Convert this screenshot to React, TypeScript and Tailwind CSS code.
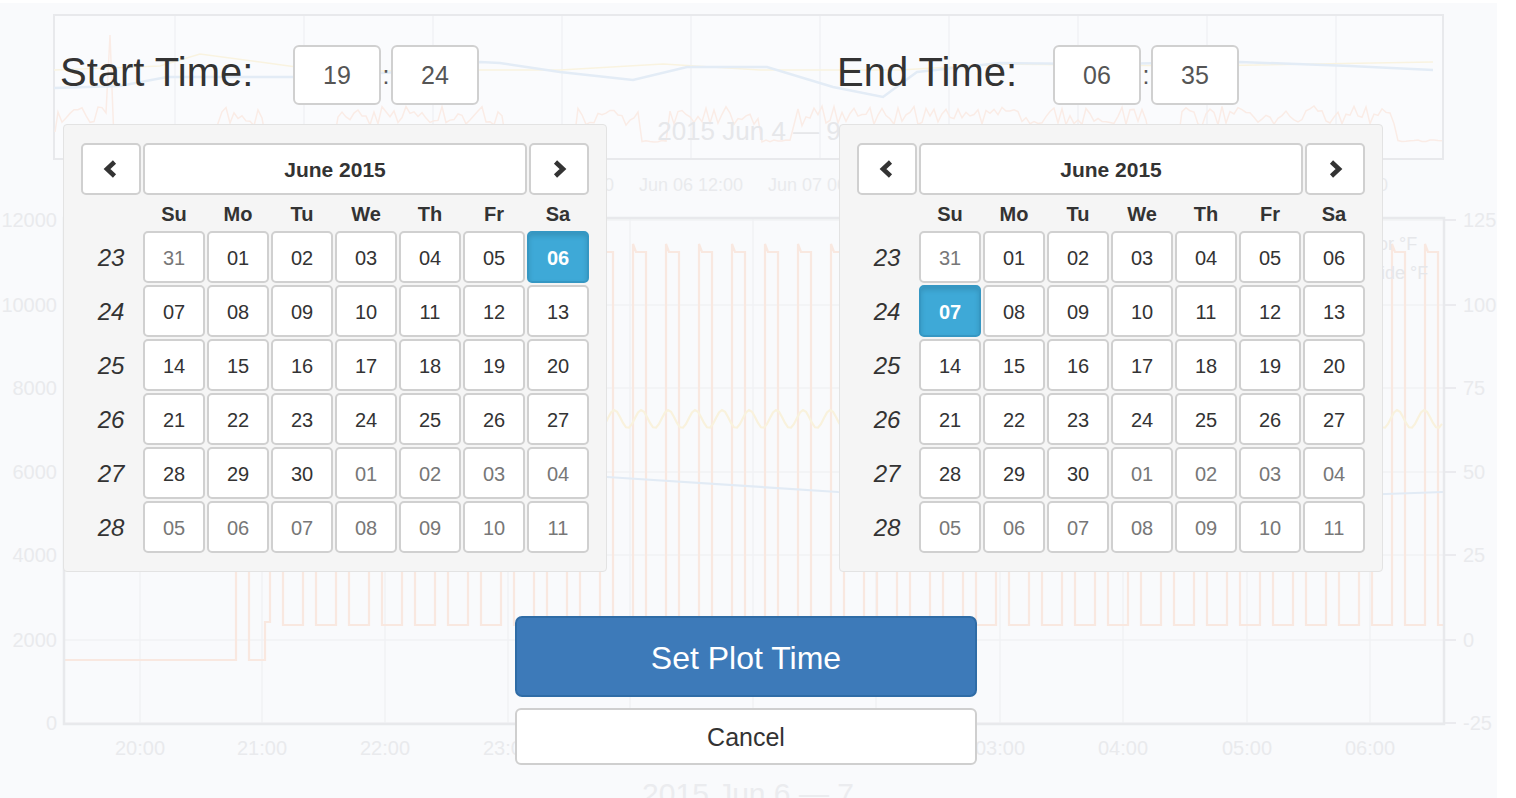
import { Fragment } from 'react'

const pad = (n: number) => String(n).padStart(2, '0')

type Day = { n: string; out?: boolean; key: string }

function buildWeeks() {
  const all: Day[] = [{ n: '31', out: true, key: 'may-31' }]
  for (let d = 1; d <= 30; d++) all.push({ n: pad(d), key: `jun-${pad(d)}` })
  for (let d = 1; d <= 11; d++) all.push({ n: pad(d), out: true, key: `jul-${pad(d)}` })
  const weeks: { wk: number; days: Day[] }[] = []
  for (let w = 0; w < 6; w++) weeks.push({ wk: 23 + w, days: all.slice(w * 7, w * 7 + 7) })
  return weeks
}

const WEEKS = buildWeeks()
const DOW = ['Su', 'Mo', 'Tu', 'We', 'Th', 'Fr', 'Sa']

function rand(i: number) {
  const s = Math.sin(i * 12.9898) * 43758.5453
  return s - Math.floor(s)
}

// faded chart behind the dialog
function Backdrop() {
  const label = '#e9eaed'
  const grid = '#f1f2f5'
  const frame = '#e8e9ec'

  const topLows = [[112, 215], [265, 335], [505, 575], [640, 668], [760, 790], [1150, 1180], [1395, 1444]]
  let topOrange = 'M55,132'
  for (let x = 58; x <= 1442; x += 4) {
    const low = topLows.some(([a, b]) => x >= a && x <= b)
    let y = low ? 140 + rand(x) * 2 : 106 + rand(x) * 20
    if (x === 110) y = 35
    topOrange += ` L${x},${y.toFixed(1)}`
  }
  const topBlue = '54,88 120,86 167,77 300,77 400,72 480,62 500,63 560,72 633,80 687,67 767,67 833,87 883,97 917,72 1000,63 1100,64 1240,62 1350,66 1433,70'
  const topYellow = '54,70 160,66 200,54 260,62 333,72 420,70 560,70 663,64 760,70 900,70 1000,64 1200,66 1433,62'

  let wave = 'M65,660 L236,660 L236,252 L249,252 L249,660 L265,660 L265,622 L270,622 L270,250'
  for (let x = 270; x < 1444; x += 33) {
    wave += ` L${x},244 L${x + 3},252 L${x + 13},252 L${x + 13},625 L${x + 33},625 L${x + 33},250`
  }
  let zig = ''
  for (let x = 65; x <= 1443; x += 3) {
    zig += `${x},${(419 + 9 * Math.sin((2 * Math.PI * x) / 27)).toFixed(1)} `
  }

  // only the tick labels that peek out between the panels
  const topGrid = [175, 304, 433, 562, 691, 820, 949, 1078, 1207, 1336]
  const topTicks = [[562, 'Jun 06 00:00'], [691, 'Jun 06 12:00'], [820, 'Jun 07 00:00'], [1336, 'Jun 09 00:00']] as const
  const xGrid = [140, 262, 385, 508, 630, 753, 876, 1000, 1123, 1247, 1370]
  const xTicks = [
    [140, '20:00'], [262, '21:00'], [385, '22:00'], [508, '23:00'],
    [1000, '03:00'], [1123, '04:00'], [1247, '05:00'], [1370, '06:00'],
  ] as const
  const yTicks = [
    [220, '12000', '125'], [305, '10000', '100'], [388, '8000', '75'], [472, '6000', '50'],
    [555, '4000', '25'], [640, '2000', '0'], [723, '0', '-25'],
  ] as const

  return (
    <svg className="absolute left-0 top-0" width="1516" height="798" viewBox="0 0 1516 798" fontFamily="'Liberation Sans', Arial, sans-serif">
      <defs>
        <clipPath id="topclip"><rect x="54" y="15" width="1389" height="144" /></clipPath>
        <clipPath id="mainclip"><rect x="65" y="219" width="1378" height="504" /></clipPath>
      </defs>
      <rect x="0" y="3" width="1497" height="795" fill="#f9fafc" />

      {/* overview */}
      <rect x="54" y="15" width="1389" height="144" fill="#fafbfd" stroke={frame} strokeWidth="2" />
      {topGrid.map(x => <line key={x} x1={x} x2={x} y1="16" y2="158" stroke={grid} strokeWidth="1.5" />)}
      <g clipPath="url(#topclip)" fill="none" strokeWidth="1.5">
        <path d={topOrange} stroke="#faece6" />
        <polyline points={topYellow} stroke="#f9f3e0" />
        <polyline points={topBlue} stroke="#e3ecf6" strokeWidth="2.5" />
      </g>
      <text x="749" y="140" fontSize="26" textAnchor="middle" fill="#e6e7ea">2015 Jun 4 — 9</text>
      {topTicks.map(([x, t]) => (
        <text key={t} x={x} y="191" fontSize="18" textAnchor="middle" fill={label}>{t}</text>
      ))}

      {/* main plot */}
      {xGrid.map(x => <line key={x} x1={x} x2={x} y1="219" y2="723" stroke={grid} strokeWidth="1.5" />)}
      {yTicks.map(([y]) => <line key={y} x1="65" x2="1456" y1={y} y2={y} stroke={grid} strokeWidth="1.5" />)}
      <g clipPath="url(#mainclip)" fill="none" strokeWidth="2.2">
        <path d={wave} stroke="#f9e8e0" />
        <polyline points={zig} stroke="#f9f2dd" />
        <polyline points="65,462 300,468 607,477 838,492 1100,500 1300,497 1443,492" stroke="#e2ebf5" />
      </g>
      <rect x="64" y="218" width="1380" height="506" fill="none" stroke={frame} strokeWidth="2.5" />
      {yTicks.map(([y, l, r]) => (
        <Fragment key={y}>
          <line x1="1444" x2="1456" y1={y} y2={y} stroke={frame} strokeWidth="1.5" />
          <text x="57" y={y + 7} fontSize="20" textAnchor="end" fill={label}>{l}</text>
          <text x="1463" y={y + 7} fontSize="20" fill={label}>{r}</text>
        </Fragment>
      ))}
      {xTicks.map(([x, t]) => (
        <text key={t} x={x} y="755" fontSize="20" textAnchor="middle" fill={label}>{t}</text>
      ))}
      <text x="1343" y="250" fontSize="18" fill="#e6e7ea">Indoor °F</text>
      <text x="1343" y="279" fontSize="18" fill="#e6e7ea">Outside °F</text>
      <text x="748" y="804" fontSize="30" textAnchor="middle" fill="#ebecef">2015 Jun 6 — 7</text>
    </svg>
  )
}

function Chevron({ dir }: { dir: 'left' | 'right' }) {
  return (
    <svg width="18" height="20" viewBox="0 0 18 20">
      <polyline
        points={dir === 'left' ? '12.5,3 5,10 12.5,17' : '5.5,3 13,10 5.5,17'}
        fill="none"
        stroke="#333"
        strokeWidth="4.6"
      />
    </svg>
  )
}

function Calendar({ selected }: { selected: string }) {
  return (
    <div className="w-[544px] rounded-[4px] border border-[#e3e3e3] bg-[#f5f5f5] px-[17px] py-[18px]">
      <div className="flex h-[52px] gap-[2px]">
        <button className="flex w-[60px] items-center justify-center rounded-[5px] border-2 border-[#d0d0d0] bg-white">
          <Chevron dir="left" />
        </button>
        <button className="flex-1 rounded-[5px] border-2 border-[#d0d0d0] bg-white pt-[2px] text-[21px] font-bold text-[#333]">
          June 2015
        </button>
        <button className="flex w-[60px] items-center justify-center rounded-[5px] border-2 border-[#d0d0d0] bg-white">
          <Chevron dir="right" />
        </button>
      </div>
      <div className="grid grid-cols-[60px_repeat(7,62px)] gap-[2px]">
        <div className="h-[34px]" />
        {DOW.map(d => (
          <div key={d} className="flex h-[34px] items-center justify-center pt-[4px] text-[20px] font-bold text-[#333]">
            {d}
          </div>
        ))}
        {WEEKS.map(w => (
          <Fragment key={w.wk}>
            <div className="flex h-[52px] items-center justify-center pt-[2px] text-[24px] italic text-[#333]">{w.wk}</div>
            {w.days.map(d =>
              d.key === selected ? (
                <div
                  key={d.key}
                  className="flex h-[52px] items-center justify-center rounded-[5px] border-2 border-[#3597c3] bg-[#3ea9d7] pt-[2px] text-[20px] font-bold text-white shadow-[inset_0_3px_5px_rgba(0,0,0,0.125)]"
                >
                  {d.n}
                </div>
              ) : (
                <div
                  key={d.key}
                  className={
                    d.out
                      ? 'flex h-[52px] items-center justify-center rounded-[5px] border-2 border-[#d0d0d0] bg-white pt-[2px] text-[20px] text-[#777]'
                      : 'flex h-[52px] items-center justify-center rounded-[5px] border-2 border-[#d0d0d0] bg-white pt-[2px] text-[20px] text-[#333]'
                  }
                >
                  {d.n}
                </div>
              ),
            )}
          </Fragment>
        ))}
      </div>
    </div>
  )
}

function TimeBox({ v }: { v: string }) {
  return (
    <div className="flex h-[60px] w-[88px] items-center justify-center rounded-[6px] border-2 border-[#d0d0d0] bg-white pt-[2px] text-[25px] text-[#555]">
      {v}
    </div>
  )
}

function TimeColumn({ label, h, m, selected, labelClass, className }: {
  label: string; h: string; m: string; selected: string; labelClass: string; className?: string
}) {
  return (
    <div className={className}>
      <div className="flex h-[60px] items-center">
        <span className={labelClass}>{label}</span>
        <TimeBox v={h} />
        <span className="w-[10px] pt-[2px] text-center text-[25px] text-[#555]">:</span>
        <TimeBox v={m} />
      </div>
      <div className="mt-[19px]">
        <Calendar selected={selected} />
      </div>
    </div>
  )
}

export default function App() {
  return (
    <div className="relative h-[798px] w-[1516px] overflow-hidden bg-white font-['Liberation_Sans',Arial,sans-serif]">
      <Backdrop />
      <div className="absolute inset-0 pl-[63px] pt-[45px]">
        <div className="flex">
          <TimeColumn
            className="w-[776px]"
            label="Start Time:"
            h="19"
            m="24"
            selected="jun-06"
            labelClass="-ml-[3px] mb-[6px] w-[233px] text-[40px] leading-none text-[#333]"
          />
          <TimeColumn
            label="End Time:"
            h="06"
            m="35"
            selected="jun-07"
            labelClass="-ml-[2px] mb-[6px] w-[216px] text-[40px] leading-none text-[#333]"
          />
        </div>
        <div className="ml-[452px] mt-[44px] flex w-[462px] flex-col gap-[11px]">
          <button className="h-[81px] rounded-[7px] border-2 border-[#2f6ca6] bg-[#3d7ab9] pt-[2px] text-[32px] text-white">
            Set Plot Time
          </button>
          <button className="h-[57px] rounded-[6px] border-2 border-[#cfcfcf] bg-white pt-[2px] text-[25px] text-[#333]">
            Cancel
          </button>
        </div>
      </div>
    </div>
  )
}
